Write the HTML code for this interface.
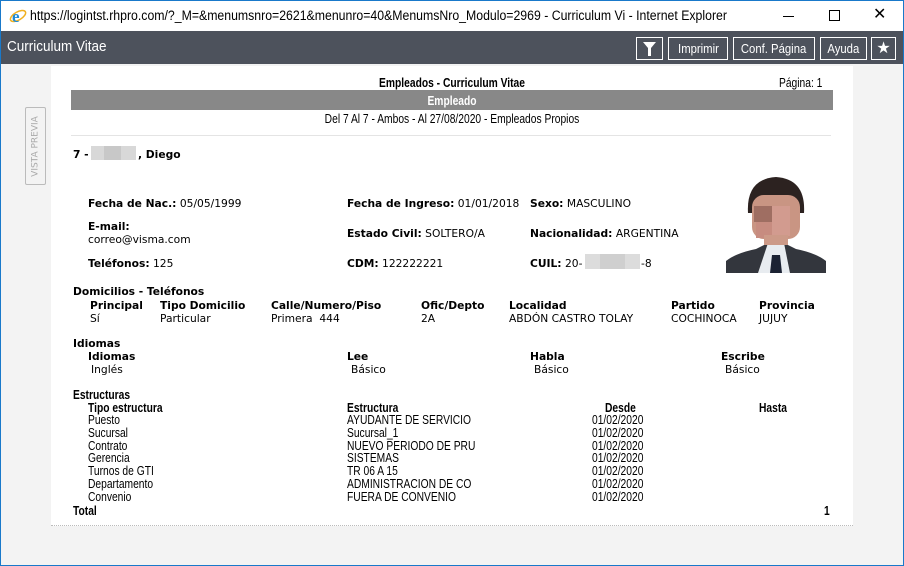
<!DOCTYPE html>
<html><head><meta charset="utf-8"><style>
*{margin:0;padding:0;box-sizing:border-box}
body{width:904px;height:566px;overflow:hidden;background:#f3f3f3;position:relative;font-family:"DejaVu Sans",Verdana,sans-serif;font-size:10.7px;color:#000}
.a{position:absolute;white-space:nowrap;line-height:13px}
.n{font-family:"Liberation Sans",sans-serif;font-size:13px;transform:scaleX(0.79);transform-origin:0 0}
.c{transform-origin:50% 0}
b{font-weight:bold}
.btn{position:absolute;top:37px;height:23px;border:1px solid #fff;color:#fff;font-family:"Liberation Sans",sans-serif;font-size:13px;line-height:21px;text-align:center;overflow:hidden}
.btn span{display:inline-block;transform:scaleX(0.87)}
</style></head><body>
<div style="position:absolute;left:0;top:0;width:904px;height:566px;border:1px solid #1979ca"></div>
<div style="position:absolute;left:1px;top:1px;width:902px;height:30px;background:#fff"></div>
<svg style="position:absolute;left:9px;top:7px" width="18" height="18" viewBox="0 0 18 18"><ellipse cx="9" cy="9" rx="8.5" ry="4" fill="none" stroke="#f0b020" stroke-width="1.5" transform="rotate(-30 9 9)"/><text x="3" y="15" font-family="Liberation Serif" font-size="17" font-weight="bold" fill="#1e8ad6">e</text></svg>
<div class="a" style="left:30px;top:8px;font-family:'Liberation Sans',sans-serif;font-size:13.5px;line-height:16px;transform:scaleX(0.91);transform-origin:0 0">https://logintst.rhpro.com/?_M=&amp;menumsnro=2621&amp;menunro=40&amp;MenumsNro_Modulo=2969 - Curriculum Vi - Internet Explorer</div>
<div style="position:absolute;left:783px;top:16px;width:11px;height:1px;background:#000"></div>
<div style="position:absolute;left:829px;top:10px;width:11px;height:11px;border:1px solid #000"></div>
<div class="a" style="left:873px;top:7px;font-family:'Liberation Sans';font-size:16px;line-height:16px">✕</div>
<div style="position:absolute;left:1px;top:31px;width:902px;height:33px;background:#4d525c"></div>
<div class="a" style="left:7px;top:38px;color:#fff;font-family:'Liberation Sans',sans-serif;font-size:15px;line-height:18px;transform:scaleX(0.9);transform-origin:0 0">Curriculum Vitae</div>
<div class="btn" style="left:636px;width:27px"><svg width="15" height="17" viewBox="0 0 15 17" style="margin-top:2px"><path d="M1 2h13l-5 6v8h-3v-8z" fill="#fff"/></svg></div>
<div class="btn" style="left:668px;width:60px"><span>Imprimir</span></div>
<div class="btn" style="left:733px;width:82px"><span>Conf. Página</span></div>
<div class="btn" style="left:820px;width:47px"><span>Ayuda</span></div>
<div class="btn" style="left:871px;width:25px;font-size:16px">★</div>
<div style="position:absolute;left:25px;top:107px;width:21px;height:78px;border:1px solid #bbb;border-radius:2px;background:#f3f3f3"></div>
<div class="a" style="left:-3px;top:140px;width:78px;text-align:center;transform:rotate(-90deg);color:#aaa;font-size:9px">VISTA PREVIA</div>
<div style="position:absolute;left:51px;top:66px;width:802px;height:460px;background:#fff;border-bottom:1px dotted #bbb"></div>
<div class="a n c" style="left:0;width:904px;text-align:center;top:76px;font-weight:bold">Empleados - Curriculum Vitae</div>
<div class="a n" style="left:779px;top:76px">Página: 1</div>
<div style="position:absolute;left:71px;top:90px;width:762px;height:20px;background:#888"></div>
<div class="a n c" style="left:71px;width:762px;text-align:center;top:94px;color:#fff;font-weight:bold">Empleado</div>
<div class="a n c" style="left:0;width:904px;text-align:center;top:112px">Del 7 Al 7 - Ambos - Al 27/08/2020 - Empleados Propios</div>
<div style="position:absolute;left:71px;top:135px;width:760px;height:1px;background:#e4e4e4"></div>
<div class="a" style="left:73px;top:148px"><b>7 -</b></div>
<div style="position:absolute;left:91px;top:146px;width:45px;height:14px;background:#d8d8d8"></div>
<div style="position:absolute;left:104px;top:146px;width:17px;height:14px;background:#c8c8c8"></div>
<div class="a" style="left:138px;top:148px"><b>, Diego</b></div>
<div class="a" style="left:88px;top:197px"><b>Fecha de Nac.:</b> 05/05/1999</div>
<div class="a" style="left:88px;top:220px"><b>E-mail:</b></div>
<div class="a" style="left:88px;top:233px">correo@visma.com</div>
<div class="a" style="left:88px;top:257px"><b>Teléfonos:</b> 125</div>
<div class="a" style="left:347px;top:197px"><b>Fecha de Ingreso:</b> 01/01/2018</div>
<div class="a" style="left:347px;top:227px"><b>Estado Civil:</b> SOLTERO/A</div>
<div class="a" style="left:347px;top:257px"><b>CDM:</b> 122222221</div>
<div class="a" style="left:530px;top:197px"><b>Sexo:</b> MASCULINO</div>
<div class="a" style="left:530px;top:227px"><b>Nacionalidad:</b> ARGENTINA</div>
<div class="a" style="left:530px;top:257px"><b>CUIL:</b> 20-</div>
<div style="position:absolute;left:585px;top:254px;width:55px;height:15px;background:#dcdcdc"></div>
<div style="position:absolute;left:600px;top:254px;width:25px;height:15px;background:#cfcfcf"></div>
<div class="a" style="left:641px;top:257px">-8</div>
<svg style="position:absolute;left:726px;top:173px" width="100" height="100" viewBox="0 0 100 100">
<rect width="100" height="100" fill="#fff"/>
<path d="M0 100V88Q10 80 30 76L42 70H58L70 76Q90 80 100 88V100Z" fill="#33363d"/>
<path d="M32 100L42 70H58L64 100Z" fill="#e8ecf0"/>
<path d="M44 100L46 82H54L56 100Z" fill="#1b2233"/>
<path d="M22 40Q20 6 50 4Q80 6 78 40Z" fill="#2c2220"/>
<rect x="26" y="22" width="48" height="44" rx="12" fill="#c99583"/>
<rect x="28" y="33" width="18" height="16" fill="#9f6e62"/>
<rect x="46" y="33" width="18" height="30" fill="#d29b8f"/>
<rect x="30" y="49" width="16" height="16" fill="#c78c80"/>
<rect x="38" y="62" width="24" height="10" fill="#cc9a88"/>
</svg>
<div class="a" style="left:73px;top:285px"><b>Domicilios - Teléfonos</b></div>
<div class="a" style="left:90px;top:299px"><b>Principal</b></div>
<div class="a" style="left:160px;top:299px"><b>Tipo Domicilio</b></div>
<div class="a" style="left:271px;top:299px"><b>Calle/Numero/Piso</b></div>
<div class="a" style="left:421px;top:299px"><b>Ofic/Depto</b></div>
<div class="a" style="left:509px;top:299px"><b>Localidad</b></div>
<div class="a" style="left:671px;top:299px"><b>Partido</b></div>
<div class="a" style="left:759px;top:299px"><b>Provincia</b></div>
<div class="a" style="left:90px;top:312px">Sí</div>
<div class="a" style="left:160px;top:312px">Particular</div>
<div class="a" style="left:271px;top:312px">Primera&nbsp; 444</div>
<div class="a" style="left:421px;top:312px">2A</div>
<div class="a" style="left:509px;top:312px">ABDÓN CASTRO TOLAY</div>
<div class="a" style="left:671px;top:312px">COCHINOCA</div>
<div class="a" style="left:759px;top:312px">JUJUY</div>
<div class="a" style="left:73px;top:337px"><b>Idiomas</b></div>
<div class="a" style="left:88px;top:350px"><b>Idiomas</b></div>
<div class="a" style="left:347px;top:350px"><b>Lee</b></div>
<div class="a" style="left:530px;top:350px"><b>Habla</b></div>
<div class="a" style="left:721px;top:350px"><b>Escribe</b></div>
<div class="a" style="left:91px;top:363px">Inglés</div>
<div class="a" style="left:351px;top:363px">Básico</div>
<div class="a" style="left:534px;top:363px">Básico</div>
<div class="a" style="left:725px;top:363px">Básico</div>
<div class="a n" style="left:73px;top:388px;font-weight:bold">Estructuras</div>
<div class="a n" style="left:88px;top:401px;font-weight:bold">Tipo estructura</div>
<div class="a n" style="left:347px;top:401px;font-weight:bold">Estructura</div>
<div class="a n" style="left:605px;top:401px;font-weight:bold">Desde</div>
<div class="a n" style="left:759px;top:401px;font-weight:bold">Hasta</div>
<div class="a n" style="left:88px;top:414px;line-height:12.8px">Puesto<br>Sucursal<br>Contrato<br>Gerencia<br>Turnos de GTI<br>Departamento<br>Convenio</div>
<div class="a n" style="left:347px;top:414px;line-height:12.8px">AYUDANTE DE SERVICIO<br>Sucursal_1<br>NUEVO PERIODO DE PRU<br>SISTEMAS<br>TR 06 A 15<br>ADMINISTRACION DE CO<br>FUERA DE CONVENIO</div>
<div class="a n" style="left:592px;top:414px;line-height:12.8px">01/02/2020<br>01/02/2020<br>01/02/2020<br>01/02/2020<br>01/02/2020<br>01/02/2020<br>01/02/2020</div>
<div class="a n" style="left:73px;top:504px;font-weight:bold">Total</div>
<div class="a n" style="left:824px;top:504px;font-weight:bold">1</div>
</body></html>
